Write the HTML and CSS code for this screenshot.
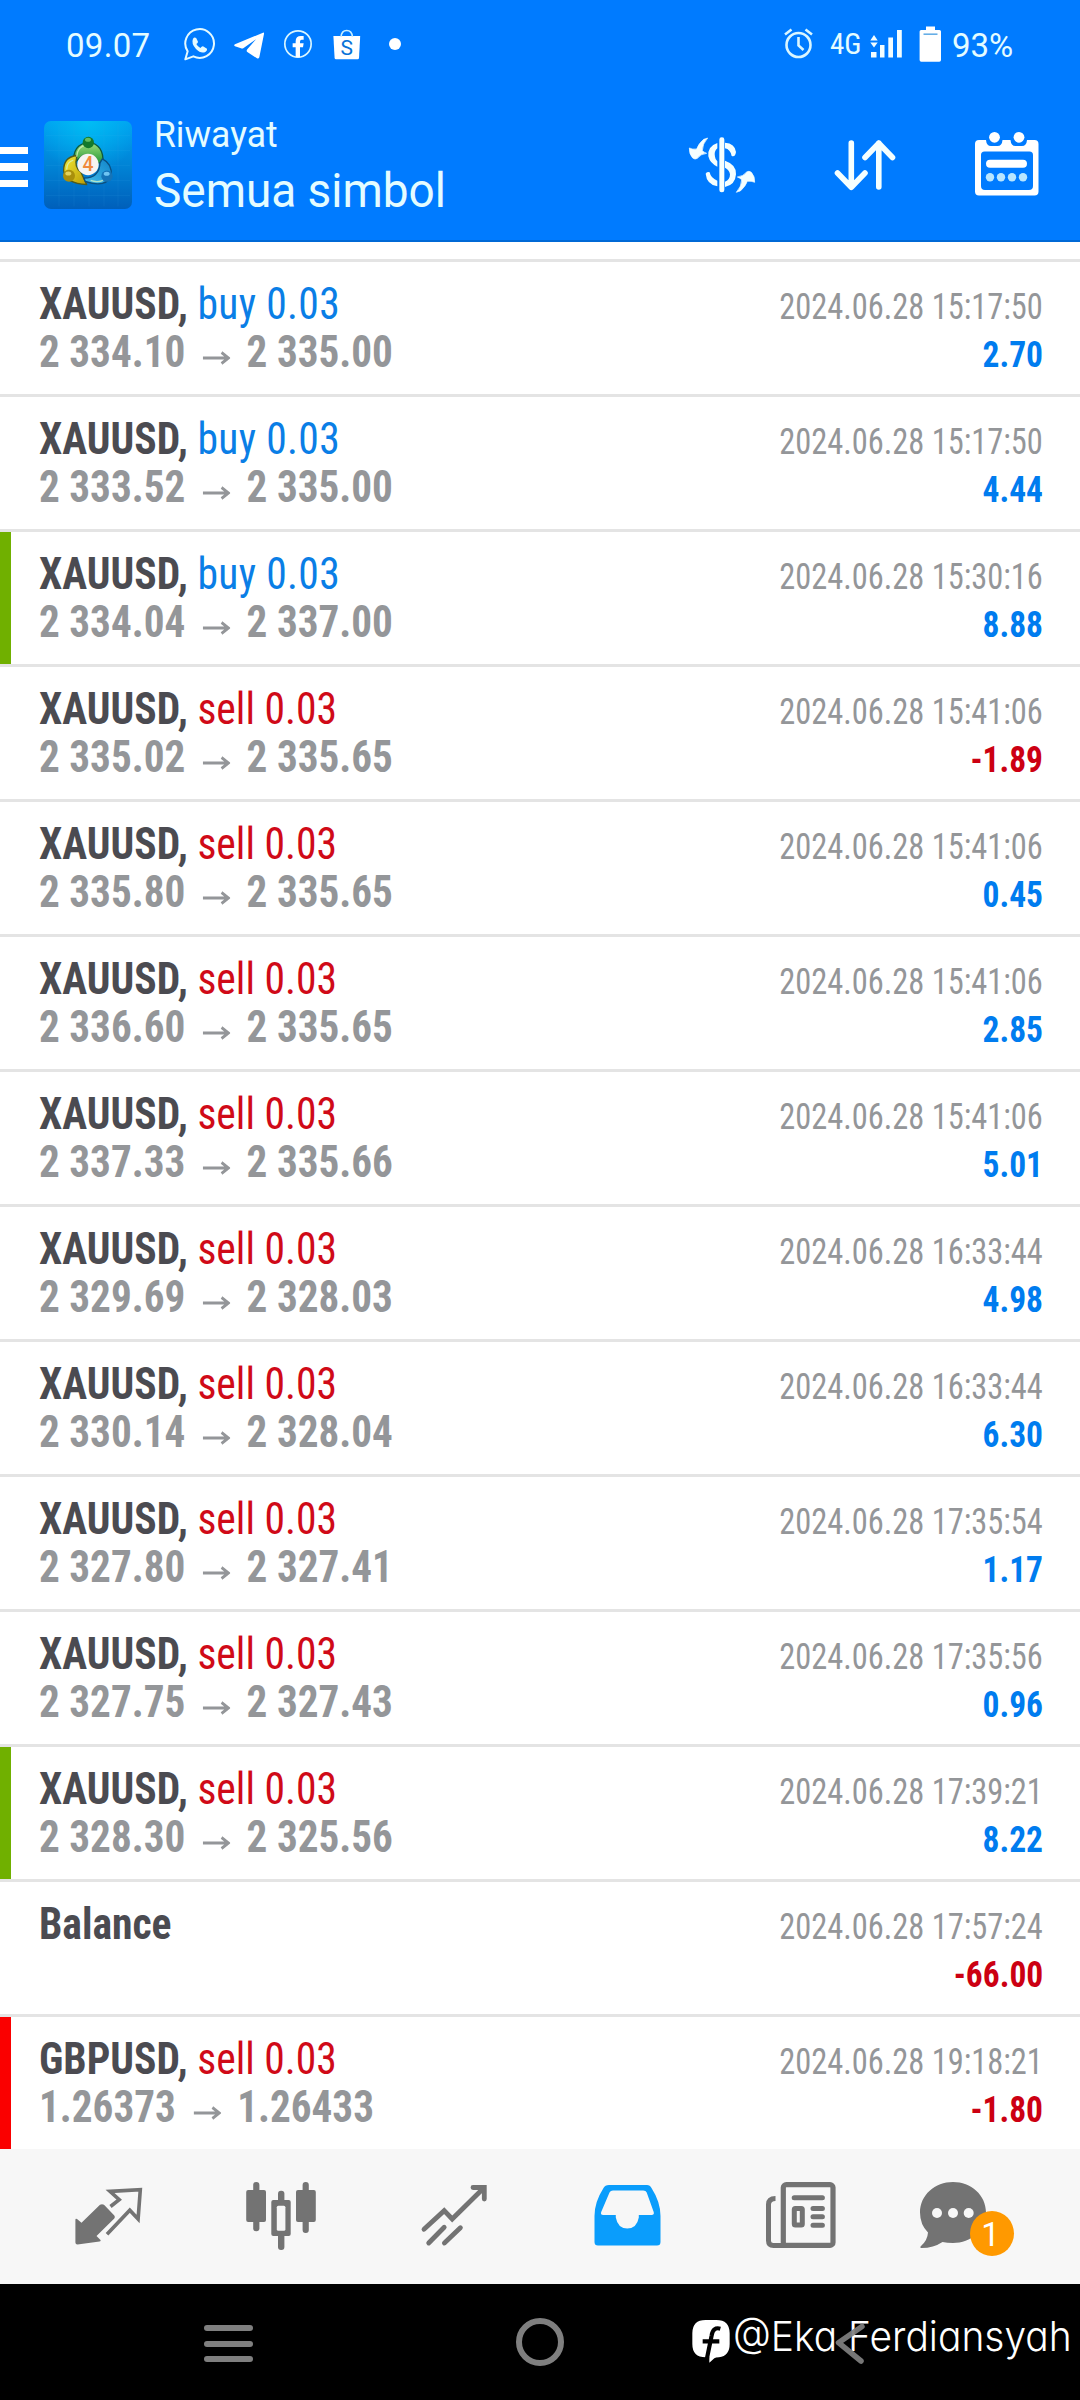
FILE: index.html
```html
<!DOCTYPE html>
<html lang="id">
<head>
<meta charset="utf-8">
<title>Riwayat</title>
<link rel="stylesheet" href="styles.css">
</head>
<body>
<div class="screen">
  <header class="header">
    <div class="status">
      <span class="clock">09.07</span>
      <svg class="wa" width="34" height="36" viewBox="184 26 34 36"><g transform="translate(175 20) scale(.3333)"><path d="M31 118l7-24A43 43 0 1 1 55 109z" fill="none" stroke="#e4faff" stroke-width="6" stroke-linejoin="round"/><path d="M54 56q5-7 10-1l5 10q0 4-5 7 4 8 12 12 5-6 8-5l12 7q2 5-4 9-13 8-29-8-15-17-9-31z" fill="#e4faff"/></g></svg>
      <svg class="tg" width="34" height="36" viewBox="232 26 34 36"><g transform="translate(175 20) scale(.3333)"><path d="M180 73l84-35q4-1 3 4l-14 70q-2 5-7 3l-29-19q-4-4 0-8l26-30-37 26q-4 3-8 1l-18-6q-5-3 0-6z" fill="#fff"/></g></svg>
      <svg class="fb" width="30" height="36" viewBox="283 26 30 36"><g transform="translate(175 20) scale(.3333)"><circle cx="369" cy="72" r="39.500" fill="none" stroke="#d9f6ff" stroke-width="5"/><path d="M362 112V82h-9V70h9v-6q0-16 16-16h8v11h-6q-5 0-5 6v5h11l-2 12h-9v30z" fill="#fff"/></g></svg>
      <svg class="shop" width="30" height="36" viewBox="332 26 30 36"><path d="M333.400 36h26.800l-1.200 22q-.1 1.300-1.400 1.300h-21.600q-1.300 0-1.400-1.300z" fill="#fff"/><path d="M341 37q.5-6.500 5.700-6.500T352.500 37" fill="none" stroke="#c9efff" stroke-width="1.600"/><text x="346.800" y="55" text-anchor="middle" class="bag">S</text></svg>
      <i class="dot"></i>
      <div class="status-right">
        <svg width="31" height="36" viewBox="783 26 31 36" fill="none" stroke="#d9f6ff" stroke-width="2.600"><circle cx="798.500" cy="45" r="12"/><path d="M798.500 37v8.500l5 4.500M785 34.500l6.500-5M812 34.500l-6.500-5"/></svg>
        <span class="net">4G</span>
        <svg class="sig" width="34" height="36" viewBox="869 26 34 36" fill="#f2fdff"><path d="M871 52h5.500v5.500H871zM880 45h4.500v12.500H880zM888.300 37.500h4.700v20h-4.700zM897 30h4.800v27.500H897zM870.300 40.500l3.700-5.500 3.700 5.500zM870.300 42.500h7.400l-3.700 5z"/></svg>
        <svg class="bat" width="24" height="36" viewBox="918 26 24 36"><path d="M926 26.500h9V30h4.500q1.500 0 1.500 1.500V60q0 1.700-1.700 1.700h-18q-1.700 0-1.700-1.700V31.500q0-1.500 1.500-1.500h4.900z" fill="#fff"/><path d="M923.500 34.200h14" stroke="#66aee6" stroke-width="1.600"/></svg>
        <span class="pct">93%</span>
      </div>
    </div>
    <div class="appbar">
      <div class="burger"><i></i><i></i><i></i></div>
      <svg class="logo" width="88" height="88" viewBox="44 121.500 88 88">
        <defs>
          <linearGradient id="bg" x1="0" y1="0" x2="0" y2="1"><stop offset="0" stop-color="#00a0f0"/><stop offset=".5" stop-color="#0084d6"/><stop offset="1" stop-color="#005fba"/></linearGradient>
          <radialGradient id="glow" cx=".5" cy="0" r=".6"><stop offset="0" stop-color="#00c4f5" stop-opacity=".8"/><stop offset="1" stop-color="#00c4f5" stop-opacity="0"/></radialGradient>
          <linearGradient id="gr" x1="0" y1="0" x2="0" y2="1"><stop offset="0" stop-color="#9fe07a"/><stop offset="1" stop-color="#1e9338"/></linearGradient>
          <linearGradient id="ye" x1="0" y1="0" x2="1" y2="1"><stop offset="0" stop-color="#f2ea35"/><stop offset="1" stop-color="#b99b06"/></linearGradient>
          <linearGradient id="bl" x1="1" y1="0" x2="0" y2="1"><stop offset="0" stop-color="#0f83c9"/><stop offset="1" stop-color="#43bdec"/></linearGradient>
        </defs>
        <rect x="44" y="121.500" width="88" height="88" rx="7" fill="url(#bg)"/>
        <rect x="44" y="121.500" width="88" height="88" rx="7" fill="url(#glow)"/>
        <path d="M59 124v83M74 124v83M89 124v83M104 124v83M118 124v83M46 136h84M46 151h84M46 166h84M46 181h84M46 196h84" stroke="#3fb4f0" stroke-opacity=".12" stroke-width=".8"/>
        <g transform="translate(30 110) scale(.3333)" stroke-linejoin="round">
          <path d="M132 160q-6-54 43-62 48 6 44 66l-26-8q-8-24-34-18z" fill="url(#gr)" stroke="#0e5a3c" stroke-width="4"/>
          <path d="M138 138q-38 6-37 46 6 38 69 41l-18-38q-20-14-12-43z" fill="url(#ye)" stroke="#4f5a1c" stroke-width="4"/>
          <path d="M217 148q30 14 27 52-18 36-78 16l-4-10q46 0 48-46z" fill="url(#bl)" stroke="#0b4f80" stroke-width="4"/>
          <path d="M140 142q2-32 30-36M110 180q0-22 20-28M182 213q22 8 40-2" fill="none" stroke="#d8f5c0" stroke-width="4" opacity=".75"/>
          <circle cx="175" cy="99" r="17" fill="#137a2c"/><ellipse cx="174" cy="91" rx="9" ry="6" fill="#63bd62"/>
          <circle cx="117" cy="199" r="18" fill="#a98f0c"/><ellipse cx="115" cy="192" rx="9" ry="6" fill="#e2d25a"/>
          <circle cx="231" cy="200" r="17" fill="#1574b8"/><ellipse cx="230" cy="193" rx="9" ry="6" fill="#6fc5f2"/>
          <circle cx="174" cy="165" r="32" fill="#f6f4f2"/>
          <text x="174" y="185" text-anchor="middle" class="four">4</text>
        </g>
      </svg>
      <div class="titles"><div class="sub">Riwayat</div><div class="title">Semua simbol</div></div>
      <div class="actions">
        <svg width="72" height="70" viewBox="686 130 72 70" fill="#f5ffff"><g transform="translate(680 120) scale(.3333)"><rect x="118" y="52" width="15" height="165" rx="7"/><path d="M112 69v16q-11 10-7 25 1 9 7 14v16q-22-10-27-31-3-30 27-40zM135 68q30 2 33 28-2 16-13 12-4-20-20-23zM135 122q35 12 33 41-2 32-33 38v-16q15-6 15-22-2-14-15-20zM77 161q3-7 12-4 3 17 23 25v17q-32-6-35-38z"/><path id="turn" d="M83 54q-8 3-12 4-16 14-21 29-12 2-22-3-1 18 10 30 7 6 14 1 10-13 28-15-8-3-13-8 0-20 16-38z" stroke="#f5ffff" stroke-width="2"/><use href="#turn" transform="rotate(180 126 135.500)"/></g></svg>
        <svg width="66" height="70" viewBox="832 130 66 70" fill="none" stroke="#f5ffff" stroke-width="5.600" stroke-linecap="round" stroke-linejoin="round"><path d="M851.300 143v44M837.500 173l13.800 14.300L865 173M878.800 187v-44M865 157.500l13.800-14.300L892.500 157.500"/></svg>
        <svg width="69" height="70" viewBox="972 130 69 70"><path d="M979 140h7q.5 6 5 6h6.500q4.500 0 5-6h8q.5 6 5 6h6.500q4.500 0 5-6h7.500q4 0 4 4v47.500q0 4-4 4H979q-4 0-4-4V144q0-4 4-4zm5.500 11.500q-3.500 0-3.500 3.500v31q0 4 4 4h44q4 0 4-4v-31q0-3.500-3.500-3.500z" fill="#fff" fill-rule="evenodd"/><g fill="#fff"><circle cx="994.500" cy="137.300" r="5.400"/><circle cx="1019" cy="137.300" r="5.400"/><rect x="986" y="159.700" width="41" height="8" rx="4"/></g><g fill="#b9e6ff"><circle cx="990" cy="177.300" r="4.200"/><circle cx="1001" cy="177.300" r="4.200"/><circle cx="1012" cy="177.300" r="4.200"/><circle cx="1023" cy="177.300" r="4.200"/></g></svg>
      </div>
    </div>
  </header>
  <main class="list" id="list"></main>
  <nav class="tabs">
    <svg width="76" height="79" viewBox="70 2177 76 79"><path d="M75.400 2220q0-2 1.600-1l4.500 3.800 18.500-18q2-1.300 4 0l10.300 10.600q1.200 1.600 0 3l-17.800 17.700 4 3.800q.8 1.400-1 1.700l-22 3q-2.100 0-2.100-2z" fill="#737373"/><path d="M110.500 2206.500l8.700-6.900-9.200-8.200 30.300-1.800-2.200 29.400-8.300-8.800-22.800 24" fill="none" stroke="#737373" stroke-width="3.600"/></svg>
    <svg class="t2" width="76" height="79" viewBox="243 2177 76 79" fill="#737373"><rect x="253.200" y="2182" width="6.200" height="49.300" rx="3"/><rect x="246.200" y="2190" width="19.800" height="32" rx="2"/><rect x="302.600" y="2182" width="6.200" height="51" rx="3"/><rect x="296" y="2190" width="19.800" height="32" rx="2"/><rect x="278" y="2190.700" width="6.400" height="59.300" rx="3"/><rect x="271.300" y="2200" width="19.400" height="36" rx="2"/><rect x="276.800" y="2205.700" width="8.600" height="25" rx="1.500" fill="#f7f7f7"/></svg>
    <svg class="t3" width="76" height="79" viewBox="418 2177 76 79" fill="none" stroke="#737373" stroke-width="4.800" stroke-linecap="round"><path d="M424 2229.300l20.200-18.600 8 8.300 31.500-31M473 2187.500h11.300v11.500M428.700 2243l15.500-15.700M444.400 2243l16-15.300"/></svg>
    <svg class="t4" width="76" height="79" viewBox="590 2177 76 79"><path d="M609 2185h38q3 0 4.500 3 9 14 9 28v26q0 3.500-3.500 3.500h-59q-3.500 0-3.500-3.500v-26q0-14 9-28 1.500-3 5.500-3zm4 5.500q-2.500 0-3.500 2l-8.300 19.500q-1 3 2 3h12.600v2.500q2 11 11.500 11t11.500-11V2215h12.700q3 0 2.200-3l-7-19.500q-.8-2-3.500-2z" fill="#0a9dfc" fill-rule="evenodd"/></svg>
    <svg class="t5" width="79" height="79" viewBox="761 2177 79 79" fill="none" stroke="#737373"><path d="M775.500 2198.500q-7 0-7 6v36q0 5 5 5h15" stroke-width="5"/><rect x="783.300" y="2184.600" width="49.700" height="60.800" rx="3" stroke-width="5.200"/><rect x="794.300" y="2208.600" width="8" height="16.500" rx="1" stroke-width="5"/><path d="M794.200 2197.700h28.200M813 2208.500h9.400M813 2216.800h9.400M813 2225.200h9.400" stroke-width="5" stroke-linecap="round"/></svg>
    <div class="chat">
      <svg width="105" height="79" viewBox="915 2177 105 79"><path d="M953 2182c18 0 33 13 33 30.500S971 2243 953 2243q-6 0-10.500-1-9 6-21 6-2.500-.5 0-2.500 6-5.500 6.500-13-8-8-8-20C920 2195 935 2182 953 2182z" fill="#737373"/><g fill="#f7f7f7"><circle cx="937" cy="2213" r="5"/><circle cx="953" cy="2213" r="5"/><circle cx="968.700" cy="2213" r="5"/></g></svg>
      <span class="badge">1</span>
    </div>
  </nav>
  <footer class="sysnav">
    <div class="recents"><i></i><i></i><i></i></div>
    <div class="home"></div>
    <div class="mark">
      <svg width="40" height="48" viewBox="691 2317 40 48"><g transform="translate(685 2300) scale(.3333)"><path d="M62 60h32q40 0 40 40v32q0 36-32 40-10 0-14 3l-15 13v-16H62q-40 0-40-40v-32q0-40 40-40z" fill="#fff"/><path d="M106 86q-22-6-26 20l-16 78M53 124h50" fill="none" stroke="#000" stroke-width="12.500"/></g></svg>
      <span>@Eka Ferdiansyah</span>
    </div>
    <svg class="back" width="33" height="44" viewBox="834 2320 33 44"><path d="M862 2326.500l-23.500 16.200 22.500 18.300" fill="none" stroke="#7f7f7f" stroke-width="5.500" stroke-linecap="round" stroke-linejoin="round" opacity=".93"/></svg>
  </footer>
</div>
<script src="app.js"></script>
</body>
</html>
```
FILE: app.js
```js
const deals = [
  ["XAUUSD", "buy", "2 334.10", "2 335.00", "15:17:50", "2.70"],
  ["XAUUSD", "buy", "2 333.52", "2 335.00", "15:17:50", "4.44"],
  ["XAUUSD", "buy", "2 334.04", "2 337.00", "15:30:16", "8.88", "tp"],
  ["XAUUSD", "sell", "2 335.02", "2 335.65", "15:41:06", "-1.89"],
  ["XAUUSD", "sell", "2 335.80", "2 335.65", "15:41:06", "0.45"],
  ["XAUUSD", "sell", "2 336.60", "2 335.65", "15:41:06", "2.85"],
  ["XAUUSD", "sell", "2 337.33", "2 335.66", "15:41:06", "5.01"],
  ["XAUUSD", "sell", "2 329.69", "2 328.03", "16:33:44", "4.98"],
  ["XAUUSD", "sell", "2 330.14", "2 328.04", "16:33:44", "6.30"],
  ["XAUUSD", "sell", "2 327.80", "2 327.41", "17:35:54", "1.17"],
  ["XAUUSD", "sell", "2 327.75", "2 327.43", "17:35:56", "0.96"],
  ["XAUUSD", "sell", "2 328.30", "2 325.56", "17:39:21", "8.22", "tp"],
  ["Balance", "", "", "", "17:57:24", "-66.00"],
  ["GBPUSD", "sell", "1.26373", "1.26433", "19:18:21", "-1.80", "sl"]
];
const arrow = '<svg class="arrow" width="30" height="14" viewBox="0 0 30 14"><path d="M0 7h27M20.500 1.500L28 7l-7.500 5.500" fill="none" stroke="#949699" stroke-width="3"/></svg>';
document.getElementById("list").innerHTML = deals.map(([sym, side, from, to, time, profit, mark = ""]) => `
  <div class="row ${mark}">
    <div class="line">
      <div class="symbol"><b>${sym}${side ? "," : ""}</b>${side ? ` <span class="${side}">${side} 0.03</span>` : ""}</div>
      <div class="time">2024.06.28 ${time}</div>
    </div>
    <div class="line">
      <div class="prices">${from ? from + arrow + to : "&nbsp;"}</div>
      <div class="profit${profit[0] === "-" ? " loss" : ""}">${profit}</div>
    </div>
  </div>`).join("");
```
FILE: styles.css
```css
* { box-sizing: border-box; }
body { margin: 0; background: #fff; font-family: Roboto, "Liberation Sans", sans-serif; }
svg { display: block; flex: none; }
.screen { width: 1080px; height: 2400px; display: flex; flex-direction: column; overflow: hidden; }

.header { height: 242px; background: #007bff; border-bottom: 2px solid #0069d6; color: #e4fcff; }
.status { height: 88px; display: flex; align-items: center; padding: 0 66px 0 66px; }
.clock, .pct { font-size: 33px; font-weight: 450; line-height: 36px; padding-top: 4px; white-space: nowrap; }
.clock { width: 85px; letter-spacing: .3px; }
.wa { margin-left: 33px; }
.tg { margin-left: 14px; }
.fb { margin-left: 17px; }
.shop { margin-left: 19px; }
.bag { font: 400 21px Roboto, sans-serif; fill: #0872d8; }
.dot { width: 12px; height: 12px; border-radius: 50%; background: #fff; margin-left: 27px; }
.status-right { margin-left: auto; display: flex; align-items: center; }
.net { font-size: 29px; font-stretch: 75%; width: 32px; margin-left: 16px; }
.sig { margin-left: 7px; }
.bat { margin-left: 15px; }
.pct { width: 62px; margin-left: 10px; }

.appbar { height: 154px; display: flex; align-items: center; padding-right: 39px; }
.burger { width: 28px; display: grid; gap: 9px; padding-top: 4px; }
.burger i { height: 7.5px; background: #fff; }
.logo { margin-left: 16px; }
.titles { margin: 2px 0 0 22px; }
.sub { font-size: 36px; line-height: 42px; transform: scaleX(.985); transform-origin: 0 0; }
.title { font-size: 48px; line-height: 56px; margin-top: 7px; transform: scaleX(.957); transform-origin: 0 0; white-space: nowrap; }
.actions { margin-left: auto; display: flex; gap: 74px; }
.four { font: 500 58px Roboto, sans-serif; fill: #f08a3c; }

.list { height: 1907px; padding-top: 17px; background: #fff; }
.row { height: 135px; border-top: 3px solid #e4e4e4; padding: 18px 37px 0 39px; position: relative; }
.row.tp::before, .row.sl::before { content: ""; position: absolute; left: 0; top: 0; bottom: 0; width: 11px; }
.tp::before { background: #70b000; }
.sl::before { background: #fa0000; }
.line { display: flex; justify-content: space-between; align-items: baseline; height: 48px; line-height: 48px; font-stretch: 75%; white-space: nowrap; }
.symbol { font-size: 45px; transform: scaleX(.924); transform-origin: 0 0; }
.symbol b { color: #4b4b51; }
.buy { color: #0a7ee6; letter-spacing: .35px; }
.sell { color: #d00a18; }
.prices { display: flex; align-items: center; font-size: 45px; font-weight: 700; color: #949699; transform: scaleX(.915); transform-origin: 0 0; }
.arrow { margin: 12px 18px 0 19px; }
.time { font-size: 36px; color: #949699; transform: scaleX(.9); transform-origin: 100% 0; }
.profit { font-size: 36px; font-weight: 700; color: #007cef; transform: scaleX(.93); transform-origin: 100% 0; }
.profit.loss { color: #cc0012; }

.tabs { height: 135px; background: #f7f7f7; display: flex; align-items: center; padding-left: 70px; }
.t2 { margin-left: 97px; }
.t3 { margin-left: 99px; }
.t4 { margin-left: 96px; }
.t5 { margin-left: 95px; }
.chat { margin-left: 75px; position: relative; }
.badge { position: absolute; left: 55px; top: 34px; width: 44px; height: 45px; border-radius: 50%; background: #ff9900; color: #fff; font-size: 33px; line-height: 47px; text-align: center; padding-right: 3px; }

.sysnav { height: 116px; background: #000; position: relative; display: flex; align-items: center; }
.recents { margin-left: 203.500px; width: 49px; display: grid; gap: 9.500px; padding-top: 3px; }
.recents i { height: 6px; border-radius: 3px; background: #7f7f7f; }
.home { width: 48px; height: 48px; border: 6px solid #7f7f7f; border-radius: 50%; margin-left: 263.500px; }
.back { position: absolute; left: 834px; top: 36px; }
.mark { position: absolute; left: 691px; top: 33px; display: flex; color: #fff; }
.mark span { font: 300 41px/48px Inter, sans-serif; font-feature-settings: "cv11"; white-space: nowrap; margin: -5px 0 0 2px; transform: scaleX(.95); transform-origin: 0 0; }
```
